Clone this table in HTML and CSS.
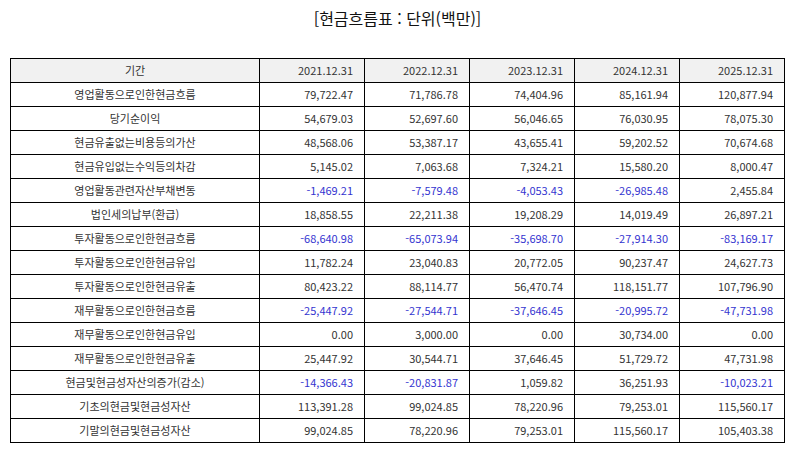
FILE: index.html
```html
<!DOCTYPE html>
<html lang="ko">
<head>
<meta charset="utf-8">
<title>현금흐름표</title>
<link rel="stylesheet" href="styles.css">
</head>
<body>
<div class="page">
  <h1 class="title">[현금흐름표 : 단위(백만)]</h1>
  <table class="cf">
    <colgroup>
      <col class="c-label"><col class="c-num"><col class="c-num"><col class="c-num"><col class="c-num"><col class="c-num">
    </colgroup>
    <thead>
      <tr><th class="label">기간</th><th>2021.12.31</th><th>2022.12.31</th><th>2023.12.31</th><th>2024.12.31</th><th>2025.12.31</th></tr>
    </thead>
    <tbody>
      <tr><td class="label">영업활동으로인한현금흐름</td><td>79,722.47</td><td>71,786.78</td><td>74,404.96</td><td>85,161.94</td><td>120,877.94</td></tr>
      <tr><td class="label">당기순이익</td><td>54,679.03</td><td>52,697.60</td><td>56,046.65</td><td>76,030.95</td><td>78,075.30</td></tr>
      <tr><td class="label">현금유출없는비용등의가산</td><td>48,568.06</td><td>53,387.17</td><td>43,655.41</td><td>59,202.52</td><td>70,674.68</td></tr>
      <tr><td class="label">현금유입없는수익등의차감</td><td>5,145.02</td><td>7,063.68</td><td>7,324.21</td><td>15,580.20</td><td>8,000.47</td></tr>
      <tr><td class="label">영업활동관련자산부채변동</td><td class="neg">-1,469.21</td><td class="neg">-7,579.48</td><td class="neg">-4,053.43</td><td class="neg">-26,985.48</td><td>2,455.84</td></tr>
      <tr><td class="label">법인세의납부(환급)</td><td>18,858.55</td><td>22,211.38</td><td>19,208.29</td><td>14,019.49</td><td>26,897.21</td></tr>
      <tr><td class="label">투자활동으로인한현금흐름</td><td class="neg">-68,640.98</td><td class="neg">-65,073.94</td><td class="neg">-35,698.70</td><td class="neg">-27,914.30</td><td class="neg">-83,169.17</td></tr>
      <tr><td class="label">투자활동으로인한현금유입</td><td>11,782.24</td><td>23,040.83</td><td>20,772.05</td><td>90,237.47</td><td>24,627.73</td></tr>
      <tr><td class="label">투자활동으로인한현금유출</td><td>80,423.22</td><td>88,114.77</td><td>56,470.74</td><td>118,151.77</td><td>107,796.90</td></tr>
      <tr><td class="label">재무활동으로인한현금흐름</td><td class="neg">-25,447.92</td><td class="neg">-27,544.71</td><td class="neg">-37,646.45</td><td class="neg">-20,995.72</td><td class="neg">-47,731.98</td></tr>
      <tr><td class="label">재무활동으로인한현금유입</td><td>0.00</td><td>3,000.00</td><td>0.00</td><td>30,734.00</td><td>0.00</td></tr>
      <tr><td class="label">재무활동으로인한현금유출</td><td>25,447.92</td><td>30,544.71</td><td>37,646.45</td><td>51,729.72</td><td>47,731.98</td></tr>
      <tr><td class="label">현금및현금성자산의증가(감소)</td><td class="neg">-14,366.43</td><td class="neg">-20,831.87</td><td>1,059.82</td><td>36,251.93</td><td class="neg">-10,023.21</td></tr>
      <tr><td class="label">기초의현금및현금성자산</td><td>113,391.28</td><td>99,024.85</td><td>78,220.96</td><td>79,253.01</td><td>115,560.17</td></tr>
      <tr><td class="label">기말의현금및현금성자산</td><td>99,024.85</td><td>78,220.96</td><td>79,253.01</td><td>115,560.17</td><td>105,403.38</td></tr>
    </tbody>
  </table>
</div>
</body>
</html>
```

FILE: styles.css
```css
html, body {
  margin: 0;
  padding: 0;
  background: #ffffff;
}

.page {
  padding: 8px 9px 0 10px;
  font-family: "Noto Sans CJK KR", "Noto Sans", sans-serif;
  color: #333333;
}

.title {
  margin: 0;
  font-size: 16px;
  font-weight: normal;
  line-height: 20px;
  text-align: center;
  color: #111111;
}

.cf {
  margin-top: 30px;
  width: 775px;
  border-collapse: collapse;
  table-layout: fixed;
  font-size: 11px;
}

.c-label { width: 249px; }
.c-num { width: 105px; }

.cf th,
.cf td {
  border: 1px solid #000000;
  height: 23px;
  padding: 0 11px 0 4px;
  line-height: 23px;
  text-align: right;
  font-weight: normal;
  white-space: nowrap;
  color: #333333;
}

.cf thead th {
  background: #f1f1f1;
}

.cf .label {
  text-align: center;
  padding: 0 4px;
}

.cf .neg {
  color: #3434d0;
}
```
